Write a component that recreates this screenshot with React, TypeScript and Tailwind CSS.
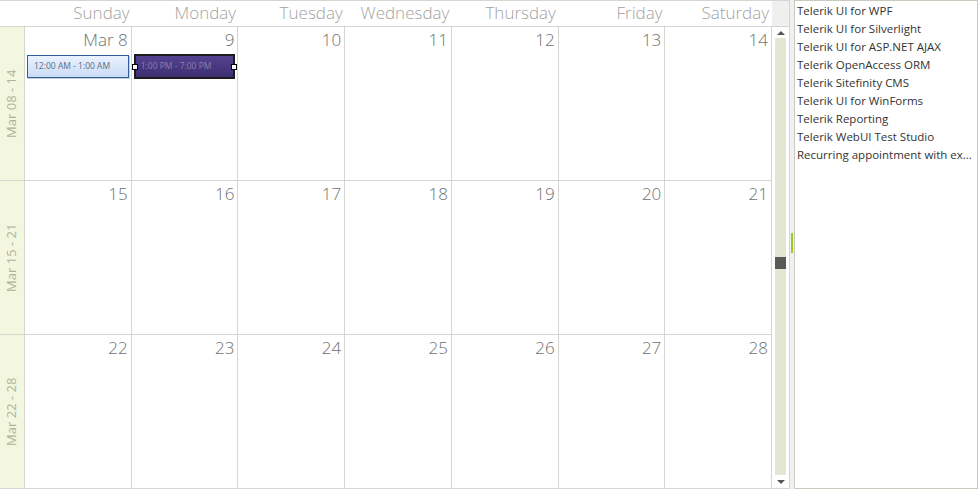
const days = ['Sunday', 'Monday', 'Tuesday', 'Wednesday', 'Thursday', 'Friday', 'Saturday'];

const weeks = [
  { label: 'Mar 08 - 14', dates: ['Mar 8', '9', '10', '11', '12', '13', '14'] },
  { label: 'Mar 15 - 21', dates: ['15', '16', '17', '18', '19', '20', '21'] },
  { label: 'Mar 22 - 28', dates: ['22', '23', '24', '25', '26', '27', '28'] },
];

const items = [
  'Telerik UI for WPF',
  'Telerik UI for Silverlight',
  'Telerik UI for ASP.NET AJAX',
  'Telerik OpenAccess ORM',
  'Telerik Sitefinity CMS',
  'Telerik UI for WinForms',
  'Telerik Reporting',
  'Telerik WebUI Test Studio',
  'Recurring appointment with ex...',
];

const App = () => {
  return (
    <div
      className="flex w-[978px] h-[489px] bg-white overflow-hidden"
      style={{ fontFamily: '"Open Sans", "Noto Sans", "Liberation Sans", sans-serif' }}
    >
      {/* Calendar */}
      <div className="flex flex-col w-[772px] h-full border-t border-[#d6d6d0]">
        {/* Day header */}
        <div className="flex h-[25px] shrink-0">
          <div className="w-[26px] shrink-0" />
          {days.map((d) => (
            <div
              key={d}
              className="flex-1 text-right pr-[3px] text-[17px] leading-[24px] font-light text-[#a3a3a3]"
            >
              {d}
            </div>
          ))}
        </div>

        {/* Weeks */}
        <div className="flex flex-col flex-1 border-t border-b border-r border-[#d6d6d0]">
          {weeks.map((w, wi) => (
            <div
              key={w.label}
              className={`flex flex-1 ${wi > 0 ? 'border-t border-[#d6d6d0]' : ''}`}
            >
              <div className="w-[25px] shrink-0 bg-[#f3f7df] border-r border-[#d6d6d0] flex items-center justify-center">
                <span className="-rotate-90 whitespace-nowrap text-[13px] text-[#b0b39a]">
                  {w.label}
                </span>
              </div>
              {w.dates.map((dt, di) => (
                <div
                  key={dt}
                  className={`relative flex-1 ${di > 0 ? 'border-l border-[#d6d6d0]' : ''}`}
                >
                  <div className="text-right pr-[3px] pt-[2px] text-[17px] leading-[22px] font-light text-[#707070]">
                    {dt}
                  </div>
                  {wi === 0 && di === 0 && (
                    <div className="mx-[2px] mt-[4px] h-[23px] border border-[#2f5f9f] bg-gradient-to-b from-[#eaf2ff] to-[#c9dcf5] flex items-center pl-[6px] text-[8.5px] text-[#5c6b82] shadow-[1px_1px_0_#c6cfdc]">
                      12:00 AM - 1:00 AM
                    </div>
                  )}
                  {wi === 0 && di === 1 && (
                    <div className="relative mx-[2px] mt-[3px] h-[25px] border-2 border-[#1d1d1d] bg-gradient-to-b from-[#54428f] to-[#3d2f74] flex items-center pl-[5px] text-[8.5px] text-[#8b80ad]">
                      1:00 PM - 7:00 PM
                      <span className="absolute -left-[4px] top-[8px] w-[6px] h-[6px] bg-white border border-black" />
                      <span className="absolute -right-[4px] top-[8px] w-[6px] h-[6px] bg-white border border-black" />
                    </div>
                  )}
                </div>
              ))}
            </div>
          ))}
        </div>
      </div>

      {/* Scrollbar */}
      <div className="flex flex-col w-[17px] h-full shrink-0 border-t border-[#d6d6d0]">
        <div className="h-[25px] bg-[#efefef] shrink-0" />
        <div className="flex flex-col flex-1 border-t border-b border-[#d6d6d0] bg-white">
          <div className="h-[11px] flex items-center justify-center shrink-0">
            <span className="w-0 h-0 border-l-[4px] border-r-[4px] border-b-[4px] border-l-transparent border-r-transparent border-b-[#555]" />
          </div>
          <div className="flex-1 mx-[3px] bg-[#e4e6d4] relative">
            <div className="absolute left-0 right-0 top-[219px] h-[12px] bg-[#595a55]" />
          </div>
          <div className="h-[13px] flex items-center justify-center shrink-0">
            <span className="w-0 h-0 border-l-[4px] border-r-[4px] border-t-[4px] border-l-transparent border-r-transparent border-t-[#555]" />
          </div>
        </div>
      </div>

      {/* Splitter */}
      <div className="relative w-[5px] h-full shrink-0 bg-[#f0f0f0] border-l border-[#d6d6d0]">
        <div className="absolute left-[1px] top-[233px] w-[2px] h-[20px] bg-[#9fcc1a]" />
      </div>

      {/* Appointment list */}
      <div className="flex-1 h-full border border-[#c9c9be] bg-white pt-[1px] pl-[2px] pr-[2px] overflow-hidden">
        {items.map((it) => (
          <div
            key={it}
            className="text-[11.5px] leading-[18px] text-[#333] whitespace-nowrap"
          >
            {it}
          </div>
        ))}
      </div>
    </div>
  );
};

export default App;
